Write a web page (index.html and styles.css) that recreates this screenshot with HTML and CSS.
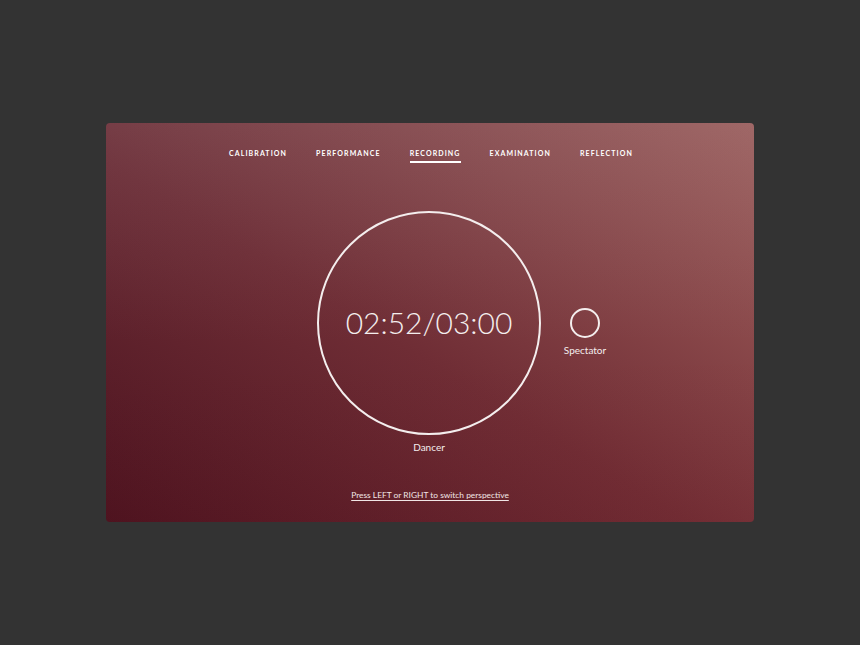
FILE: index.html
```html
<!DOCTYPE html>
<html lang="en">
<head>
<meta charset="utf-8">
<title>Recording</title>
<link rel="stylesheet" href="styles.css">
</head>
<body>
<div class="card">
  <nav class="nav">
    <span class="nav-item">CALIBRATION</span>
    <span class="nav-item">PERFORMANCE</span>
    <span class="nav-item active">RECORDING</span>
    <span class="nav-item">EXAMINATION</span>
    <span class="nav-item">REFLECTION</span>
  </nav>
  <div class="stage">
    <div class="side"></div>
    <div class="perspective dancer">
      <div class="ring big"><span class="time">02:52/03:00</span></div>
      <span class="label">Dancer</span>
    </div>
    <div class="side">
      <div class="perspective spectator">
        <div class="ring small"></div>
        <span class="label">Spectator</span>
      </div>
    </div>
  </div>
  <div class="footer"><a class="hint" href="#">Press LEFT or RIGHT to switch perspective</a></div>
</div>
</body>
</html>
```
FILE: styles.css
```css
html, body {
  margin: 0;
  padding: 0;
}
body {
  background: #333333;
  width: 860px;
  height: 645px;
  font-family: "Lato", "Open Sans", sans-serif;
  color: #ffffff;
  padding-top: 123px;
  box-sizing: border-box;
}
.card {
  width: 648px;
  height: 399px;
  margin: 0 auto;
  border-radius: 4px;
  background:
    linear-gradient(to bottom, rgba(130, 130, 150, 0.14), rgba(130, 130, 150, 0) 55%, rgba(150, 20, 20, 0.06)),
    linear-gradient(to top right, #4a1320 0%, #6f2d35 45%, #a4635f 100%);
  display: flex;
  flex-direction: column;
  box-sizing: border-box;
}
.nav {
  display: flex;
  justify-content: center;
  gap: 29px;
  padding-top: 26px;
  padding-left: 2px;
}
.nav-item {
  font-size: 7px;
  font-weight: 700;
  letter-spacing: 1.1px;
  line-height: 9px;
  padding-bottom: 3px;
  border-bottom: 2px solid transparent;
}
.nav-item.active {
  border-bottom-color: #ffffff;
}
.stage {
  display: grid;
  grid-template-columns: 1fr auto 1fr;
  margin-top: 48px;
}
.perspective {
  display: flex;
  flex-direction: column;
  align-items: center;
}
.dancer {
  margin-left: -2px;
}
.ring {
  border: 2px solid #f4eeee;
  border-radius: 50%;
  box-sizing: border-box;
  display: flex;
  align-items: center;
  justify-content: center;
}
.ring.big {
  width: 224px;
  height: 224px;
}
.ring.small {
  width: 30px;
  height: 30px;
}
.time {
  font-size: 30px;
  font-weight: 300;
  letter-spacing: 0;
  color: #f4eeee;
  margin-top: -2px;
}
.label {
  font-size: 10px;
  line-height: 12px;
  margin-top: 6px;
  color: #f4eeee;
}
.spectator {
  align-items: center;
  width: 44px;
  margin-left: 22px;
  margin-top: 97px;
}
.spectator .label {
  margin-top: 6px;
}
.footer {
  margin-top: auto;
  padding-bottom: 21px;
  text-align: center;
}
.hint {
  font-size: 8.4px;
  color: #f1e6e6;
  text-decoration: underline;
  text-underline-offset: 2px;
}
```
